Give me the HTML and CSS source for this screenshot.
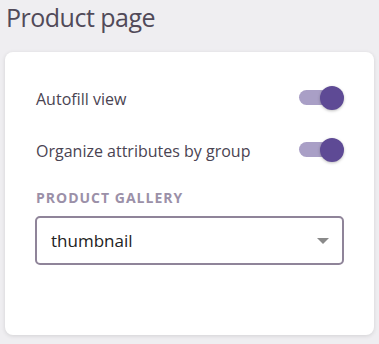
FILE: index.html
```html
<!DOCTYPE html>
<html lang="en">
<head>
<meta charset="utf-8">
<title>Product page</title>
<link rel="stylesheet" href="styles.css">
</head>
<body>
<h1 class="title">Product page</h1>
<section class="card">
  <div class="row">
    <span class="row-label">Autofill view</span>
    <span class="toggle"><span class="track"></span><span class="knob"></span></span>
  </div>
  <div class="row">
    <span class="row-label">Organize attributes by group</span>
    <span class="toggle"><span class="track"></span><span class="knob"></span></span>
  </div>
  <div class="field-label">PRODUCT GALLERY</div>
  <div class="select">
    <span class="select-value">thumbnail</span>
    <span class="caret"></span>
  </div>
</section>
</body>
</html>
```
FILE: styles.css
```css
html, body {
  margin: 0;
  padding: 0;
}
body {
  background: #efeef1;
  font-family: "Open Sans", "Noto Sans", sans-serif;
  width: 379px;
  height: 344px;
  overflow: hidden;
}
.title {
  margin: 0;
  padding: 0 0 0 6px;
  font-size: 25px;
  font-weight: 400;
  letter-spacing: -0.5px;
  line-height: 34px;
  color: #514a59;
}
.card {
  margin: 18px 5px 0 5px;
  height: 283px;
  box-sizing: border-box;
  background: #fff;
  border-radius: 8px;
  box-shadow: 0 1px 4px rgba(0, 0, 0, 0.12);
  padding: 31px 30px 0 30px;
}
.row {
  display: flex;
  align-items: center;
  justify-content: space-between;
  height: 30px;
  margin-bottom: 22px;
}
.row-label {
  font-size: 16px;
  line-height: 22px;
  color: #4a4452;
  padding: 2px 0 0 1px;
}
.toggle {
  position: relative;
  width: 45px;
  height: 24px;
  display: block;
}
.track {
  position: absolute;
  left: 0;
  top: 4px;
  width: 40px;
  height: 15px;
  border-radius: 8px;
  background: #a99fc6;
}
.knob {
  position: absolute;
  right: 0;
  top: 0;
  width: 24px;
  height: 24px;
  border-radius: 50%;
  background: #5e4a95;
  box-shadow: 0 1px 3px rgba(0, 0, 0, 0.25);
}
.field-label {
  margin-top: 23px;
  font-size: 14px;
  line-height: 20px;
  font-weight: 700;
  letter-spacing: 1px;
  color: #9b90a8;
  padding-left: 1px;
}
.select {
  margin-top: 8px;
  height: 49px;
  box-sizing: border-box;
  border: 2px solid #8f8499;
  border-radius: 5px;
  display: flex;
  align-items: center;
  justify-content: space-between;
  padding: 0 13px 0 14px;
}
.select-value {
  font-size: 17px;
  color: #222;
}
.caret {
  width: 0;
  height: 0;
  border-left: 6px solid transparent;
  border-right: 6px solid transparent;
  border-top: 6px solid #8a8a8a;
}
```
